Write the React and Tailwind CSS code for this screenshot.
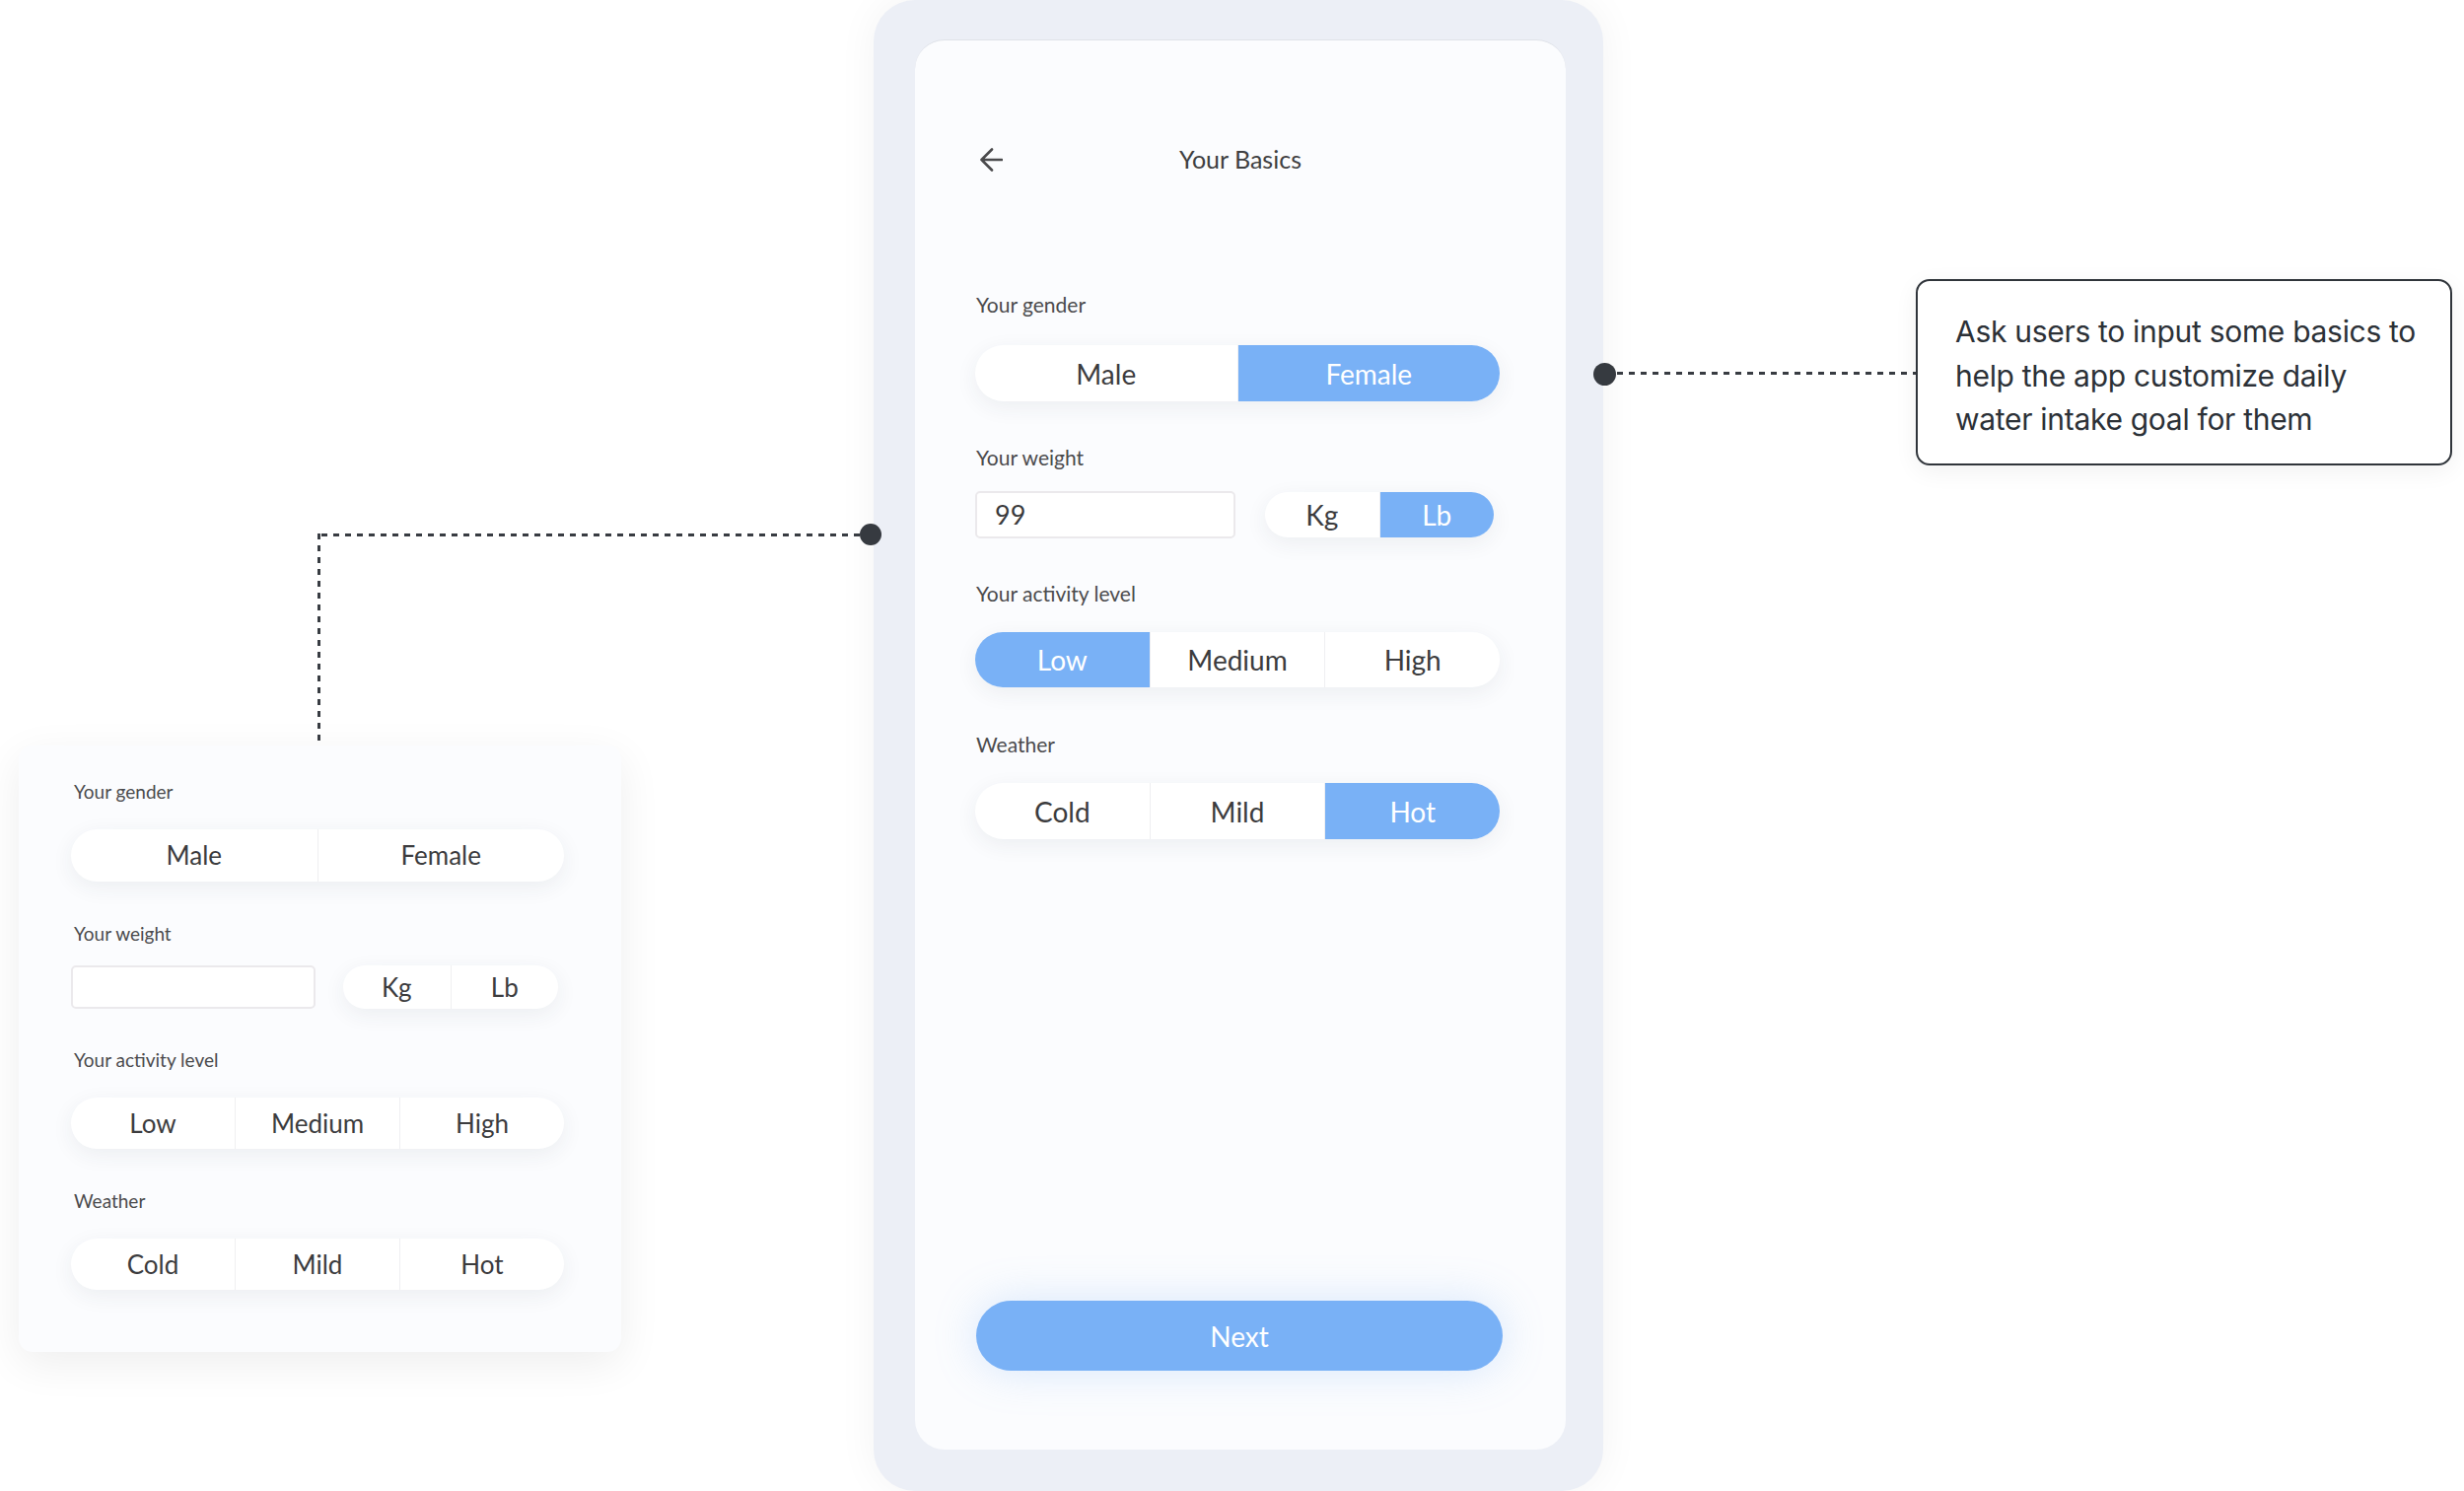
import clsx from "clsx";

const BLUE = "bg-[#79b1f6]";

function Segmented({ options, active, className, textClass }) {
  return (
    <div
      className={clsx(
        "flex overflow-hidden rounded-full bg-white shadow-[0_6px_22px_rgba(40,50,70,0.07)]",
        className
      )}
    >
      {options.map((opt, i) => (
        <div
          key={opt}
          className={clsx(
            "flex flex-1 items-center justify-center",
            textClass,
            i > 0 && "border-l border-[#efeff1]",
            opt === active ? `${BLUE} text-white` : "text-[#3c3c3e]"
          )}
        >
          {opt}
        </div>
      ))}
    </div>
  );
}

function BackArrow() {
  return (
    <svg width="24" height="24" viewBox="0 0 24 24" fill="none">
      <path
        d="M23 12H2.5M13 1.5L2.5 12L13 22.5"
        stroke="#4a4a4c"
        strokeWidth="2.6"
        strokeLinecap="round"
        strokeLinejoin="round"
      />
    </svg>
  );
}

function PhoneScreen() {
  const label = "text-[21px] leading-[28px] text-[#4b4b4d]";
  const seg = "text-[28px]";
  return (
    <div className="ml-[42px] mt-[40px] flex h-[1430px] w-[660px] flex-col rounded-[30px] border-t border-[#dfe2e8] bg-[#fbfcfe]">
      <div className="mt-[97px] flex h-[48px] items-center px-[65px]">
        <BackArrow />
        <div className="flex-1 text-center text-[25px] text-[#3f3f41]">Your Basics</div>
        <div className="w-[24px]" />
      </div>

      <div className="flex flex-col pl-[61px]">
        <div className={clsx(label, "mt-[109px] pl-[1px]")}>Your gender</div>
        <Segmented
          options={["Male", "Female"]}
          active="Female"
          className="mt-[27px] h-[57px] w-[532px]"
          textClass={seg}
        />

        <div className={clsx(label, "mt-[43px] pl-[1px]")}>Your weight</div>
        <div className="mt-[20px] flex h-[48px] w-[532px] items-center">
          <div className="flex h-[48px] w-[264px] items-center rounded-[5px] border-2 border-[#ebe9ec] bg-white pl-[18px] text-[27px] text-[#3a3a3c]">
            99
          </div>
          <Segmented
            options={["Kg", "Lb"]}
            active="Lb"
            className="ml-[30px] h-[46px] w-[232px]"
            textClass={seg}
          />
        </div>

        <div className={clsx(label, "mt-[42px] pl-[1px]")}>Your activity level</div>
        <Segmented
          options={["Low", "Medium", "High"]}
          active="Low"
          className="mt-[25px] h-[56px] w-[532px]"
          textClass={seg}
        />

        <div className={clsx(label, "mt-[44px] pl-[1px]")}>Weather</div>
        <Segmented
          options={["Cold", "Mild", "Hot"]}
          active="Hot"
          className="mt-[25px] h-[57px] w-[532px]"
          textClass={seg}
        />
      </div>

      <div className="mt-auto mb-[80px] ml-[62px] flex h-[71px] w-[534px] items-center justify-center rounded-full bg-[#79b1f6] text-[28px] text-white shadow-[0_0_44px_rgba(121,177,246,0.28)]">
        Next
      </div>
    </div>
  );
}

function SidePanel() {
  const label = "text-[19px] leading-[26px] text-[#4b4b4d] pl-[3px]";
  const seg = "text-[26px]";
  return (
    <div className="flex h-[615px] w-[611px] flex-col rounded-[14px] bg-[#fbfcfe] pl-[53px] pt-[34px] shadow-[0_12px_44px_rgba(0,0,0,0.07)]">
      <div className={label}>Your gender</div>
      <Segmented
        options={["Male", "Female"]}
        className="mt-[25px] h-[53px] w-[500px]"
        textClass={seg}
      />

      <div className={clsx(label, "mt-[40px]")}>Your weight</div>
      <div className="mt-[19px] flex h-[44px] items-center">
        <div className="h-[44px] w-[248px] rounded-[5px] border-2 border-[#ebe9ec] bg-white" />
        <Segmented
          options={["Kg", "Lb"]}
          className="ml-[28px] h-[44px] w-[218px]"
          textClass={seg}
        />
      </div>

      <div className={clsx(label, "mt-[39px]")}>Your activity level</div>
      <Segmented
        options={["Low", "Medium", "High"]}
        className="mt-[25px] h-[52px] w-[500px]"
        textClass={seg}
      />

      <div className={clsx(label, "mt-[40px]")}>Weather</div>
      <Segmented
        options={["Cold", "Mild", "Hot"]}
        className="mt-[25px] h-[52px] w-[500px]"
        textClass={seg}
      />
    </div>
  );
}

export default function App() {
  return (
    <div className="relative h-[1512px] w-[2499px] overflow-hidden bg-white font-['Lato',sans-serif]">
      {/* phone mockup */}
      <div className="absolute left-[886px] top-0 h-[1512px] w-[740px] rounded-[42px] bg-[#eceff6] shadow-[0_0_40px_rgba(0,0,0,0.05)]">
        <PhoneScreen />
      </div>

      {/* component sheet on the left */}
      <div className="absolute left-[19px] top-[756px]">
        <SidePanel />
      </div>

      {/* connector: panel -> phone */}
      <div className="absolute left-[322px] top-[541px] h-[215px] w-[3px] bg-[repeating-linear-gradient(180deg,#383c42_0_6px,transparent_6px_12px)]" />
      <div className="absolute left-[326px] top-[541px] h-[3px] w-[548px] bg-[repeating-linear-gradient(90deg,#383c42_0_6px,transparent_6px_12px)]" />
      <div className="absolute left-[872px] top-[531px] h-[22px] w-[22px] rounded-full bg-[#363a40]" />

      {/* connector: phone -> note */}
      <div className="absolute left-[1616px] top-[368px] h-[23px] w-[23px] rounded-full bg-[#363a40]" />
      <div className="absolute left-[1640px] top-[377px] h-[3px] w-[303px] bg-[repeating-linear-gradient(90deg,#383c42_0_6px,transparent_6px_12px)]" />

      {/* note */}
      <div className="absolute left-[1943px] top-[283px] h-[189px] w-[544px] rounded-[14px] border-2 border-[#30353b] bg-white pl-[38px] pt-[29px] font-['Inter',sans-serif] text-[30px] leading-[44.5px] tracking-[-0.01em] text-[#2c3137] shadow-[0_6px_24px_rgba(0,0,0,0.06)]">
        Ask users to input some basics to
        <br />
        help the app customize daily
        <br />
        water intake goal for them
      </div>
    </div>
  );
}
